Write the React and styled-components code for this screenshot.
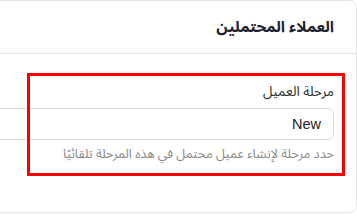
import React from 'react';
import styled, { createGlobalStyle } from 'styled-components';

const GlobalStyle = createGlobalStyle`
  html, body {
    margin: 0;
    padding: 0;
    background: #ffffff;
    direction: rtl;
    overflow: hidden;
  }
  body {
    font-family: "Noto Sans Arabic", "DejaVu Sans", "Noto Sans", sans-serif;
  }
`;

const Page = styled.div`
  width: 357px;
  height: 220px;
  overflow: hidden;
  display: flex;
  justify-content: flex-start;
`;

const Card = styled.section`
  flex: 0 0 700px;
  height: 213px;
  border: 1px solid #e6e6e6;
  border-radius: 8px;
  background: #fff;
  box-sizing: border-box;
`;

const Header = styled.header`
  height: 52px;
  border-bottom: 1px solid #e6e6e6;
  display: flex;
  align-items: center;
  padding: 0 22px;
`;

const Title = styled.h2`
  margin: 0;
  font-size: 15.5px;
  font-weight: 700;
  color: #1f2330;
`;

const Body = styled.div`
  padding: 28px 22px 50px;
`;

const Field = styled.div`
  position: relative;
  display: flex;
  flex-direction: column;
`;

const Highlight = styled.div`
  position: absolute;
  top: -9px;
  right: -11px;
  bottom: -13px;
  width: 318px;
  border: 3px solid #ff0000;
  box-sizing: border-box;
  pointer-events: none;
`;

const Label = styled.label`
  font-size: 13.6px;
  line-height: 20px;
  color: #2b2b2b;
  margin-bottom: 6px;
`;

const Input = styled.div`
  height: 32px;
  box-sizing: border-box;
  border: 1px solid #dcdcdc;
  border-radius: 6px;
  display: flex;
  align-items: center;
  padding: 0 12px;
  font-family: "Liberation Sans", Arial, sans-serif;
  font-size: 14.5px;
  color: #222;
`;

const Hint = styled.p`
  margin: 4px 0 0;
  font-size: 12.8px;
  line-height: 19px;
  color: #8a8a8a;
`;

export default function App() {
  return (
    <>
      <GlobalStyle />
      <Page>
        <Card>
          <Header>
            <Title>العملاء المحتملين</Title>
          </Header>
          <Body>
            <Field>
              <Label>مرحلة العميل</Label>
              <Input>New</Input>
              <Hint>حدد مرحلة لإنشاء عميل محتمل في هذه المرحلة تلقائيًا</Hint>
              <Highlight />
            </Field>
          </Body>
        </Card>
      </Page>
    </>
  );
}
